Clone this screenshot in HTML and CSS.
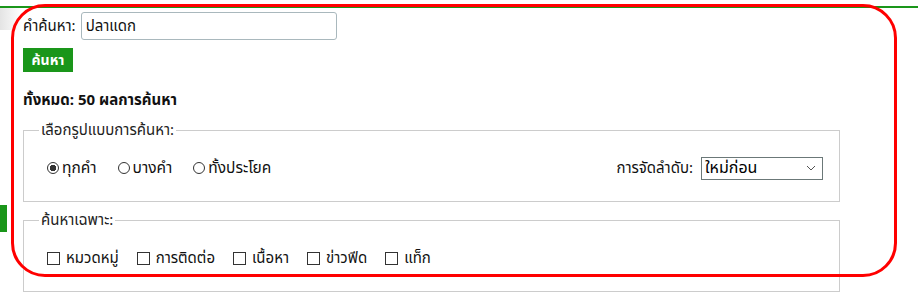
FILE: index.html
```html
<!DOCTYPE html>
<html lang="th">
    <head>
        <meta charset="UTF-8">
        <meta name="viewport" content="width=device-width, initial-scale=1.0">
        <title>ค้นหา</title>
        <link rel="stylesheet" href="styles.css">
    </head>
    <body>
        <div class="topbar"></div>
        <div class="sombra"></div>
        <div class="pestana"></div>

        <div class="busqueda">
            <form class="formulario" onsubmit="return false">
                <div class="fila-campo">
                    <label for="q">คำค้นหา:</label>
                    <input id="q" class="campo" type="text" value="ปลาแดก">
                </div>
                <button class="boton" type="submit">ค้นหา</button>
            </form>

            <div class="total">ทั้งหมด: 50 ผลการค้นหา</div>

            <fieldset class="grupo">
                <legend>เลือกรูปแบบการค้นหา:</legend>
                <div class="fila-opciones">
                    <div class="opciones radios">
                        <label class="opcion"><input type="radio" name="modo" checked> ทุกคำ</label>
                        <label class="opcion"><input type="radio" name="modo"> บางคำ</label>
                        <label class="opcion"><input type="radio" name="modo"> ทั้งประโยค</label>
                    </div>
                    <div class="orden">
                        <span>การจัดลำดับ:</span>
                        <div class="selector">
                            <span>ใหม่ก่อน</span>
                            <svg width="10" height="6" viewBox="0 0 10 6"><path d="M1 1 L5 5 L9 1" fill="none" stroke="#555" stroke-width="1"/></svg>
                        </div>
                    </div>
                </div>
            </fieldset>

            <fieldset class="grupo">
                <legend>ค้นหาเฉพาะ:</legend>
                <div class="opciones">
                    <label class="opcion"><input type="checkbox"> หมวดหมู่</label>
                    <label class="opcion"><input type="checkbox"> การติดต่อ</label>
                    <label class="opcion"><input type="checkbox"> เนื้อหา</label>
                    <label class="opcion"><input type="checkbox"> ข่าวฟีด</label>
                    <label class="opcion"><input type="checkbox"> แท็ก</label>
                </div>
            </fieldset>
        </div>

        <!-- marca roja de anotacion -->
        <div class="marca"></div>
    </body>
</html>
```

FILE: styles.css
```css
* {
    box-sizing: border-box;
    font-family: "Noto Sans Thai", "Leelawadee UI", Tahoma, "Noto Sans", sans-serif;
}

body {
    margin: 0;
    background: #fff;
    color: #111;
    font-size: 15px;
    overflow: hidden;
}

.topbar {
    height: 8px;
    border-bottom: 2px solid #1a961a;
}

.sombra {
    position: absolute;
    left: 0;
    top: 8px;
    width: 22px;
    height: 22px;
    background: linear-gradient(to right, #e4e4e4, #fff);
}

.pestana {
    position: absolute;
    left: 0;
    top: 205px;
    width: 7px;
    height: 27px;
    background: #1a961a;
}

.busqueda {
    width: 840px;
    padding: 4px 0 0 23px;
}

.fila-campo {
    display: flex;
    align-items: center;
    gap: 5px;
    height: 28px;
}

.campo {
    width: 256px;
    height: 28px;
    padding: 0 4px;
    font-size: 15px;
    border: 1px solid #a9b8bd;
    border-radius: 3px;
    color: #111;
}

.boton {
    margin-top: 8px;
    height: 24px;
    width: 50px;
    padding: 0;
    font-size: 14px;
    font-weight: bold;
    color: #fff;
    background: #1a961a;
    border: none;
    cursor: pointer;
}

.total {
    margin-top: 17px;
    font-size: 15px;
    font-weight: bold;
    height: 22px;
}

.grupo {
    margin: 8px 0 0 0;
    padding: 14px 16px 21px 23px;
    border: 1px solid #ccc;
}

.grupo + .grupo {
    margin-top: 7px;
}

.grupo legend {
    padding: 0 2px;
    margin-left: -8px;
    color: #222;
}

.fila-opciones {
    display: flex;
    justify-content: space-between;
    align-items: center;
}

.opciones {
    display: flex;
    gap: 18px;
    align-items: center;
    height: 24px;
}

.radios {
    gap: 21px;
    font-size: 15.5px;
}

.opcion {
    display: flex;
    align-items: center;
    gap: 3px;
}

.opcion input {
    appearance: none;
    margin: 0;
    width: 12px;
    height: 12px;
    border: 1px solid #333;
    background: #fff;
}

.opcion input[type="radio"] {
    border-radius: 50%;
}

.opcion input[type="radio"]:checked {
    background: radial-gradient(circle, #333 0 3px, #fff 3.5px);
}

.opcion input[type="checkbox"] {
    width: 13px;
    height: 13px;
    margin-right: 3px;
}

.orden {
    display: flex;
    align-items: center;
    gap: 8px;
}

.selector {
    display: flex;
    align-items: center;
    justify-content: space-between;
    width: 122px;
    height: 23px;
    padding: 0 6px 0 3px;
    border: 1px solid #6b7878;
    font-size: 16px;
    color: #000;
}

.marca {
    position: absolute;
    left: 11px;
    top: 4px;
    width: 886px;
    height: 273px;
    border: 3px solid #f00;
    border-radius: 34px;
    pointer-events: none;
}
```
